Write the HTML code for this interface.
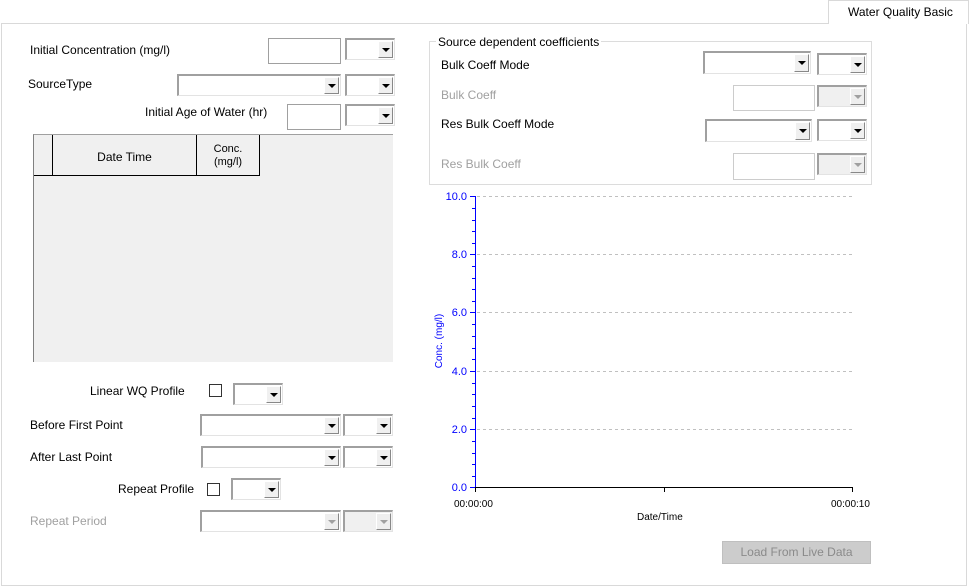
<!DOCTYPE html>
<html><head><meta charset="utf-8">
<style>
*{box-sizing:border-box;margin:0;padding:0}
body{width:969px;height:587px;background:#fff;position:relative;overflow:hidden;font-family:"Liberation Sans",sans-serif;font-size:12px;color:#000}
.a{position:absolute}
.lbl{position:absolute;white-space:nowrap;font-size:12px;line-height:14px}
.dis{color:#a0a0a0}
.tb{position:absolute;background:#fff;border:1px solid #a0a0a0}
.tb.d{border-color:#ccc}
.cb{position:absolute;background:#fff;border-top:2px solid #a0a0a0;border-left:2px solid #a0a0a0;border-right:1px solid #e3e3e3;border-bottom:1px solid #e3e3e3}
.cb .btn{position:absolute;right:1px;top:1px;bottom:1px;width:15px;background:#f0f0f0;border-right:1px solid #888;border-bottom:1px solid #888;border-left:1px solid #fff;border-top:1px solid #fff}
.cb .btn:after{content:"";position:absolute;left:3px;top:50%;margin-top:-2px;border-left:4px solid transparent;border-right:4px solid transparent;border-top:4px solid #000}
.cb.d .btn{background:#eee}
.cb.d .btn:after{border-top-color:#a0a0a0}
.cb.d{background:#f0f0f0}
.cb.dl{background:#fff}
.chk{position:absolute;width:13px;height:13px;border:1px solid #333;background:#fff}
</style></head><body>
<!-- panel -->
<div class="a" style="left:1px;top:23px;width:966px;height:563px;border:1px solid #d9d9d9"></div>
<div class="a" style="left:828px;top:0;width:141px;height:24px;border:1px solid #d9d9d9;border-bottom:none;background:#fff"></div>
<div class="lbl" style="left:848px;top:5px">Water Quality Basic</div>

<!-- left top -->
<div class="lbl" style="left:30px;top:43px">Initial Concentration (mg/l)</div>
<div class="tb" style="left:268px;top:38px;width:73px;height:26px"></div>
<div class="cb" style="left:345px;top:38px;width:50px;height:22px"><div class="btn"></div></div>

<div class="lbl" style="left:28px;top:77px">SourceType</div>
<div class="cb" style="left:177px;top:74px;width:164px;height:22px"><div class="btn"></div></div>
<div class="cb" style="left:345px;top:74px;width:50px;height:22px"><div class="btn"></div></div>

<div class="lbl" style="left:145px;top:105px">Initial Age of Water (hr)</div>
<div class="tb" style="left:287px;top:104px;width:54px;height:26px"></div>
<div class="cb" style="left:345px;top:104px;width:50px;height:22px"><div class="btn"></div></div>

<!-- grid -->
<div class="a" style="left:33px;top:134px;width:360px;height:228px;background:#f0f0f0;border-top:1px solid #a0a0a0;border-left:1px solid #808080"></div>
<div class="a" style="left:34px;top:135px;width:226px;height:41px;border-bottom:1px solid #000;border-right:1px solid #000"></div>
<div class="a" style="left:52px;top:135px;width:1px;height:41px;background:#000"></div>
<div class="a" style="left:196px;top:135px;width:1px;height:41px;background:#000"></div>
<div class="lbl" style="left:53px;top:150px;width:143px;text-align:center">Date Time</div>
<div class="lbl" style="left:197px;top:143px;width:62px;text-align:center;font-size:11px;line-height:13px">Conc.<br>(mg/l)</div>

<!-- lower left -->
<div class="lbl" style="left:90px;top:384px">Linear WQ Profile</div>
<div class="chk" style="left:209px;top:384px"></div>
<div class="cb" style="left:233px;top:383px;width:50px;height:22px"><div class="btn"></div></div>

<div class="lbl" style="left:30px;top:418px">Before First Point</div>
<div class="cb" style="left:200px;top:414px;width:141px;height:22px"><div class="btn"></div></div>
<div class="cb" style="left:343px;top:414px;width:50px;height:22px"><div class="btn"></div></div>

<div class="lbl" style="left:30px;top:450px">After Last Point</div>
<div class="cb" style="left:201px;top:446px;width:140px;height:22px"><div class="btn"></div></div>
<div class="cb" style="left:343px;top:446px;width:50px;height:22px"><div class="btn"></div></div>

<div class="lbl" style="left:118px;top:482px">Repeat Profile</div>
<div class="chk" style="left:207px;top:483px"></div>
<div class="cb" style="left:231px;top:478px;width:50px;height:22px"><div class="btn"></div></div>

<div class="lbl dis" style="left:30px;top:514px">Repeat Period</div>
<div class="cb d dl" style="left:200px;top:510px;width:141px;height:22px"><div class="btn"></div></div>
<div class="cb d" style="left:343px;top:510px;width:50px;height:22px"><div class="btn"></div></div>

<!-- group box -->
<div class="a" style="left:429px;top:41px;width:443px;height:144px;border:1px solid #dcdcdc"></div>
<div class="lbl" style="left:436px;top:35px;background:#fff;padding:0 2px">Source dependent coefficients</div>
<div class="lbl" style="left:441px;top:58px">Bulk Coeff Mode</div>
<div class="cb" style="left:703px;top:51px;width:108px;height:23px"><div class="btn"></div></div>
<div class="cb" style="left:817px;top:53px;width:50px;height:22px"><div class="btn"></div></div>
<div class="lbl dis" style="left:441px;top:88px">Bulk Coeff</div>
<div class="tb d" style="left:733px;top:85px;width:82px;height:26px"></div>
<div class="cb d" style="left:817px;top:85px;width:50px;height:22px"><div class="btn"></div></div>
<div class="lbl" style="left:441px;top:117px">Res Bulk Coeff Mode</div>
<div class="cb" style="left:705px;top:119px;width:107px;height:23px"><div class="btn"></div></div>
<div class="cb" style="left:817px;top:119px;width:50px;height:22px"><div class="btn"></div></div>
<div class="lbl dis" style="left:441px;top:157px">Res Bulk Coeff</div>
<div class="tb d" style="left:733px;top:153px;width:82px;height:27px"></div>
<div class="cb d" style="left:817px;top:153px;width:50px;height:22px"><div class="btn"></div></div>

<!-- chart -->
<svg class="a" style="left:0;top:0" width="969" height="587">
<g stroke="#c0c0c0" stroke-dasharray="3,3">
<line x1="477" y1="196.5" x2="852" y2="196.5"/>
<line x1="477" y1="254.5" x2="852" y2="254.5"/>
<line x1="477" y1="312.5" x2="852" y2="312.5"/>
<line x1="477" y1="371.5" x2="852" y2="371.5"/>
<line x1="477" y1="429.5" x2="852" y2="429.5"/>
</g>
<g stroke="#0000ff">
<line x1="475.5" y1="196" x2="475.5" y2="488"/>
<line x1="470" y1="196.5" x2="476" y2="196.5"/>
<line x1="470" y1="254.5" x2="476" y2="254.5"/>
<line x1="470" y1="312.5" x2="476" y2="312.5"/>
<line x1="470" y1="371.5" x2="476" y2="371.5"/>
<line x1="470" y1="429.5" x2="476" y2="429.5"/>
<line x1="470" y1="487.5" x2="476" y2="487.5"/>
<line x1="472" y1="208.5" x2="476" y2="208.5"/><line x1="472" y1="220.5" x2="476" y2="220.5"/><line x1="472" y1="231.5" x2="476" y2="231.5"/><line x1="472" y1="243.5" x2="476" y2="243.5"/>
<line x1="472" y1="266.5" x2="476" y2="266.5"/><line x1="472" y1="278.5" x2="476" y2="278.5"/><line x1="472" y1="289.5" x2="476" y2="289.5"/><line x1="472" y1="301.5" x2="476" y2="301.5"/>
<line x1="472" y1="324.5" x2="476" y2="324.5"/><line x1="472" y1="336.5" x2="476" y2="336.5"/><line x1="472" y1="348.5" x2="476" y2="348.5"/><line x1="472" y1="359.5" x2="476" y2="359.5"/>
<line x1="472" y1="383.5" x2="476" y2="383.5"/><line x1="472" y1="394.5" x2="476" y2="394.5"/><line x1="472" y1="406.5" x2="476" y2="406.5"/><line x1="472" y1="418.5" x2="476" y2="418.5"/>
<line x1="472" y1="441.5" x2="476" y2="441.5"/><line x1="472" y1="453.5" x2="476" y2="453.5"/><line x1="472" y1="464.5" x2="476" y2="464.5"/><line x1="472" y1="476.5" x2="476" y2="476.5"/>
</g>
<g stroke="#000">
<line x1="475" y1="487.5" x2="853" y2="487.5"/>
<line x1="475.5" y1="487" x2="475.5" y2="492"/>
<line x1="664.5" y1="487" x2="664.5" y2="492"/>
<line x1="852.5" y1="487" x2="852.5" y2="492"/>
</g>
<g fill="#0000ff" font-family="Liberation Sans,sans-serif" font-size="11" text-anchor="end">
<text x="467" y="200">10.0</text>
<text x="467" y="258">8.0</text>
<text x="467" y="316">6.0</text>
<text x="467" y="375">4.0</text>
<text x="467" y="433">2.0</text>
<text x="467" y="491">0.0</text>
<text x="442" y="341" text-anchor="middle" font-size="10" transform="rotate(-90 442 341)">Conc. (mg/l)</text>
</g>
<g fill="#000" font-family="Liberation Sans,sans-serif" font-size="10">
<text x="454" y="507">00:00:00</text>
<text x="831" y="507">00:00:10</text>
<text x="637" y="520">Date/Time</text>
</g>
</svg>

<div class="a" style="left:722px;top:541px;width:149px;height:23px;background:#cccccc;border:1px solid #bfbfbf;color:#8a8a8a;text-align:center;line-height:21px">Load From Live Data</div>
</body></html>
